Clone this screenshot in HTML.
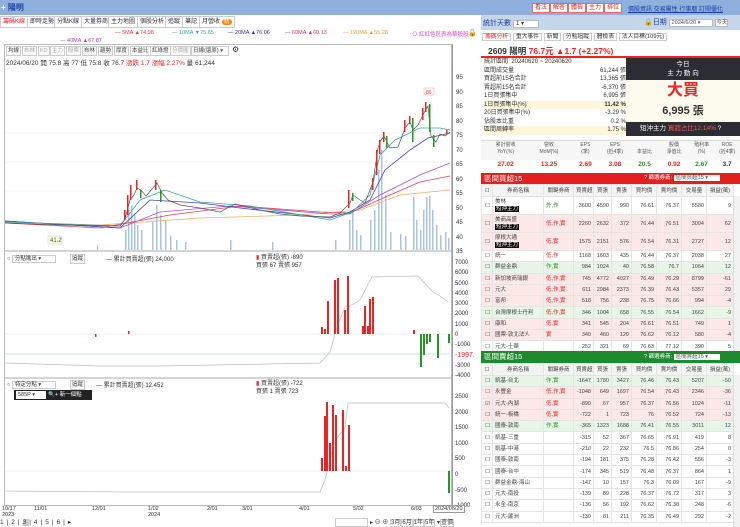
<!DOCTYPE html>
<html><head><meta charset="utf-8">
<style>
*{margin:0;padding:0;box-sizing:border-box}
body{width:740px;height:527px;overflow:hidden;background:#fff;font-family:"Liberation Sans","Noto Sans CJK TC",sans-serif;font-size:7px;color:#333;position:relative}
.a{position:absolute;white-space:nowrap}
.btn{position:absolute;border:1px solid #ccc;background:#fafafa;font-size:5.5px;line-height:8px;height:10px;padding:0 1px;color:#444}
.tab{position:absolute;top:16px;height:12px;border:1px solid #ccc;background:#fff;font-size:6px;line-height:10px;padding:0 2px}
.rb{position:absolute;top:3px;height:10px;background:#fff;border:1px solid #e66;color:#d22;font-size:6px;line-height:8px;padding:0 2px}
table{border-collapse:collapse;font-size:5.5px;table-layout:fixed}
td{border:1px solid #e4e4e4;height:11.3px;line-height:6px;padding:0 2px;text-align:right;color:#444;overflow:hidden;white-space:nowrap}
td.n{text-align:left}
tr.t td{height:18px}
tr.p td{background:#fde8e8}
tr.g td{background:#e8f6e8}
.r{color:#e22}.gr{color:#292}
.hdr td{background:#f4f4f4;text-align:center;height:12px}
.tag{background:#111;color:#fff;padding:0 1px;display:inline-block;margin-top:1px}
</style></head><body>
<div class="a" style="left:0;top:0;width:740px;height:15px;background:#8fb0dc"></div>
<div class="a" style="left:1px;top:2px;font-size:8px;color:#fff;font-weight:bold">+ <span style="color:#1a3fa8">陽明</span></div>
<div class="rb" style="left:532px">看法</div><div class="rb" style="left:550px">解答</div><div class="rb" style="left:568px">體檢</div><div class="rb" style="left:586px">主力</div><div class="rb" style="left:604px">排位</div>
<div class="a" style="left:628px;top:4px;font-size:6px;color:#1a3fa8;text-decoration:underline">價股資訊 交易屬性 行事曆 訂閱優化</div>
<div class="tab" style="left:0;color:#e22">籌碼K線</div>
<div class="tab" style="left:27px">即時走勢</div>
<div class="tab" style="left:54px">分點K線</div>
<div class="tab" style="left:81px">大量券商</div>
<div class="tab" style="left:108px">主力地圖</div>
<div class="tab" style="left:137px">個股分析</div>
<div class="tab" style="left:165px">追蹤</div>
<div class="tab" style="left:182px">筆記</div>
<div class="tab" style="left:199px">月營收 <span style="background:#f80;color:#fff;border-radius:4px;padding:0 2px">新</span></div>
<div class="a" style="left:115px;top:30px;font-size:5.5px;color:#e33">— 5MA ▲74.98</div>
<div class="a" style="left:172px;top:30px;font-size:5.5px;color:#3a9">— 10MA ▼75.65</div>
<div class="a" style="left:228px;top:30px;font-size:5.5px;color:#33a">— 20MA ▲76.06</div>
<div class="a" style="left:285px;top:30px;font-size:5.5px;color:#d36">— 60MA ▲60.13</div>
<div class="a" style="left:343px;top:30px;font-size:5.5px;color:#e9a030">— 120MA ▲55.28</div>
<div class="a" style="left:60px;top:38px;font-size:5.5px;color:#a4a">— 40MA ▲67.87</div>
<div class="a" style="left:412px;top:30px;font-size:5.5px;color:#d4c">⊙ 紅紅色區表為華股股</div>
<div class="a" style="left:468px;top:29px;font-size:7px">🔓</div>
<div class="a" style="left:4px;top:44px;width:448px;height:462px;border:1px solid #bbb"></div>
<div class="a" style="left:452px;top:44px;width:1px;height:462px;background:#99a"></div>
<div class="btn" style="left:6px;top:46px">均線</div><div class="btn" style="left:22px;top:46px;color:#aaa">布林</div><div class="btn" style="left:38px;top:46px;color:#aaa">KD</div><div class="btn" style="left:50px;top:46px;color:#aaa">主力</div><div class="btn" style="left:66px;top:46px;color:#aaa">股票</div><div class="btn" style="left:82px;top:46px">布林</div><div class="btn" style="left:98px;top:46px">趨勢</div><div class="btn" style="left:114px;top:46px">厚度</div><div class="btn" style="left:130px;top:46px">本益比</div><div class="btn" style="left:150px;top:46px">紅綠燈</div><div class="btn" style="left:170px;top:46px;color:#aaa">分價圖</div><div class="btn" style="left:191px;top:46px;width:38px">日線(還原) ▾</div><div class="a" style="left:232px;top:45px;font-size:8px">⚙</div>
<div class="a" style="left:6px;top:57px;font-size:6.5px">2024/06/20 開 75.8 高 77 低 75.8 收 76.7 <span class="r">漲跌 1.7 漲幅 2.27%</span> 量 61,244</div>
<div class="a" style="left:456px;top:71px;font-size:6px;line-height:14.5px;color:#333">95<br>90<br>85<br>80<br>75<br>70<br>65<br>60<br>55<br>50<br>45<br>40<br>35</div>
<svg class="a" style="left:0;top:0" width="480" height="527">
<g stroke="#eee" stroke-width="0.6"><line x1="5" y1="133" x2="450" y2="133"/><line x1="5" y1="162" x2="450" y2="162"/><line x1="5" y1="191" x2="450" y2="191"/><line x1="5" y1="220" x2="450" y2="220"/></g>
<g fill="#a9c4e0">
<rect x="97" y="245" width="1.2" height="5"/><rect x="125" y="230" width="1.5" height="20"/><rect x="128" y="210" width="1.5" height="40"/><rect x="131" y="205" width="1.5" height="45"/><rect x="134" y="215" width="1.5" height="35"/><rect x="137" y="225" width="1.5" height="25"/><rect x="141" y="230" width="1.5" height="20"/><rect x="152" y="222" width="1.5" height="28"/><rect x="156" y="205" width="1.5" height="45"/><rect x="160" y="215" width="1.5" height="35"/><rect x="165" y="220" width="1.5" height="30"/><rect x="170" y="236" width="1.5" height="14"/><rect x="176" y="240" width="1.5" height="10"/><rect x="185" y="242" width="1.5" height="8"/><rect x="230" y="240" width="1.5" height="10"/><rect x="272" y="242" width="1.5" height="8"/><rect x="335" y="240" width="1.5" height="10"/><rect x="349" y="220" width="1.5" height="30"/><rect x="352" y="210" width="1.5" height="40"/><rect x="356" y="230" width="1.5" height="20"/><rect x="360" y="235" width="1.5" height="15"/><rect x="370" y="220" width="1.5" height="30"/><rect x="374" y="210" width="1.5" height="40"/><rect x="378" y="170" width="1.5" height="80"/><rect x="381" y="150" width="1.5" height="100"/><rect x="385" y="195" width="1.5" height="55"/><rect x="390" y="232" width="1.5" height="18"/><rect x="400" y="234" width="1.5" height="16"/><rect x="405" y="236" width="1.5" height="14"/><rect x="413" y="197" width="1.5" height="53"/><rect x="416" y="220" width="1.5" height="30"/><rect x="420" y="230" width="1.5" height="20"/><rect x="423" y="210" width="1.5" height="40"/><rect x="426" y="197" width="1.5" height="53"/><rect x="429" y="196" width="1.5" height="54"/><rect x="432" y="210" width="1.5" height="40"/><rect x="436" y="225" width="1.5" height="25"/><rect x="440" y="235" width="1.5" height="15"/><rect x="445" y="232" width="1.5" height="18"/><rect x="448" y="238" width="1.5" height="12"/>
</g>
<polyline fill="none" stroke="#e9b060" stroke-width="0.8" points="5,222 100,225 200,218 300,215 360,210 400,195 450,190"/>
<polyline fill="none" stroke="#d45" stroke-width="0.8" points="5,223 100,228 170,215 240,206 320,212 350,213 390,195 420,182 450,176"/>
<polyline fill="none" stroke="#a5c" stroke-width="0.8" points="5,221 120,228 160,212 230,206 330,214 350,214 380,195 420,175 450,163"/>
<polyline fill="none" stroke="#44a" stroke-width="0.8" points="5,221 120,228 150,200 200,203 240,208 330,218 350,212 370,200 385,170 410,150 428,138 450,133"/>
<polyline fill="none" stroke="#3a9" stroke-width="0.8" points="5,222 120,226 140,200 165,190 200,202 250,206 330,220 352,212 370,195 380,155 395,140 420,128 440,128 450,130"/>
<polyline fill="none" stroke="#555" stroke-width="0.7" points="5,223 60,225 120,226 125,219 130,200 134,195 137,188 141,190 146,196 152,189 157,183 162,193 168,200 180,205 200,208 220,212 235,204 260,210 280,214 300,216 330,217 340,213 350,203 353,195 360,200 365,203 368,195 373,182 378,148 381,140 384,136 390,148 398,147 405,128 410,122 413,130 418,125 424,113 428,106 431,136 436,142 440,134 445,136 450,132"/>
<g fill="#e22">
<rect x="124" y="210" width="1.5" height="10"/><rect x="127" y="195" width="1.5" height="20"/><rect x="130" y="185" width="1.5" height="15"/><rect x="136" y="180" width="1.5" height="10"/><rect x="155" y="180" width="1.5" height="10"/><rect x="348" y="190" width="1.5" height="18"/><rect x="372" y="178" width="1.5" height="12"/><rect x="376" y="150" width="1.5" height="25"/><rect x="379" y="140" width="1.5" height="14"/><rect x="383" y="132" width="1.5" height="10"/><rect x="404" y="120" width="1.5" height="12"/><rect x="409" y="116" width="1.5" height="8"/><rect x="422" y="108" width="1.5" height="12"/><rect x="425" y="102" width="1.5" height="10"/><rect x="446" y="130" width="1.5" height="4"/></g>
<g fill="#292">
<rect x="140" y="190" width="1.5" height="8"/><rect x="160" y="190" width="1.5" height="12"/><rect x="352" y="193" width="1.5" height="8"/><rect x="386" y="136" width="1.5" height="12"/><rect x="412" y="118" width="1.5" height="24"/><rect x="429" y="104" width="1.5" height="28"/><rect x="433" y="135" width="1.5" height="12"/></g>
<rect x="424" y="88" width="10" height="7" fill="#fff" stroke="#e99" stroke-width="0.5"/><text x="426" y="94" font-size="5" fill="#e33">86</text>
<rect x="48" y="236" width="14" height="8" fill="#ffffe8" stroke="#ccc" stroke-width="0.5"/><text x="50" y="242" font-size="6" fill="#363">41.2</text>
<line x1="5" y1="251" x2="452" y2="251" stroke="#aaa"/>
<line x1="5" y1="378" x2="452" y2="378" stroke="#aaa"/>
<line x1="5" y1="334" x2="450" y2="334" stroke="#ddd" stroke-width="0.6"/>
<line x1="5" y1="354" x2="450" y2="354" stroke="#9bd" stroke-width="0.6"/>
<polyline fill="none" stroke="#bbb" stroke-width="0.7" points="5,363 100,366 160,366 320,363 330,352 337,327 345,307 350,306 360,300 372,277 418,276 433,292 440,296 448,302"/>
<g fill="#e22"><rect x="321" y="327" width="2" height="7"/><rect x="324" y="329" width="2" height="5"/><rect x="327" y="301" width="2" height="33"/><rect x="334" y="280" width="2" height="54"/><rect x="337" y="278" width="2" height="56"/><rect x="344" y="310" width="2" height="24"/><rect x="347" y="276" width="2" height="58"/><rect x="362" y="326" width="2" height="8"/><rect x="364" y="306" width="2" height="28"/><rect x="367" y="326" width="2" height="8"/><rect x="369" y="299" width="2" height="35"/><rect x="372" y="297" width="2" height="37"/><rect x="413" y="330" width="2" height="4"/><rect x="128" y="331" width="1.5" height="3"/></g>
<g fill="#292"><rect x="420" y="334" width="2" height="33"/><rect x="423" y="334" width="2" height="21"/><rect x="426" y="334" width="2" height="10"/><rect x="429" y="334" width="2" height="8"/><rect x="437" y="334" width="2" height="24"/><rect x="448" y="334" width="2" height="9"/><rect x="95" y="334" width="1.5" height="3"/></g>
<line x1="5" y1="471" x2="450" y2="471" stroke="#ddd" stroke-width="0.6"/>
<polyline fill="none" stroke="#bbb" stroke-width="0.7" points="5,491 120,492 320,492 325,480 335,440 345,428 348,403 445,403 449,408"/>
<g fill="#e22"><rect x="321" y="458" width="2" height="13"/><rect x="324" y="416" width="2" height="55"/><rect x="326" y="402" width="2" height="69"/><rect x="329" y="443" width="2" height="28"/><rect x="332" y="405" width="2" height="66"/><rect x="335" y="415" width="2" height="56"/><rect x="342" y="410" width="2" height="61"/><rect x="345" y="466" width="2" height="5"/><rect x="348" y="425" width="2" height="46"/></g>
<rect x="448" y="471" width="2" height="22" fill="#292"/>
</svg>
<div class="a" style="left:7px;top:254px;font-size:5.5px">○ <span style="border:1px solid #ccc;padding:0 14px 0 2px">分點進出 ▾</span></div>
<div class="btn" style="left:70px;top:254px">追蹤</div>
<div class="a" style="left:106px;top:254px;font-size:6px">— 累計買賣超(張) 24,000</div>
<div class="a" style="left:256px;top:254px;font-size:6px;line-height:8px"><span class="r">▮</span> 買賣超(張) -890<br>買張 67 賣張 957</div>
<div class="a" style="left:455px;top:258px;font-size:6px;line-height:10.3px">7000<br>6000<br>5000<br>4000<br>3000<br>2000<br>1000<br>0<br>-1000<br><span class="r" style="font-size:7px">-1997.</span><br>-3000<br>-4000</div>
<div class="a" style="left:7px;top:380px;font-size:5.5px">○ <span style="border:1px solid #ccc;padding:0 14px 0 2px">特定分點 ▾</span></div>
<div class="btn" style="left:70px;top:380px">追蹤</div>
<div class="a" style="left:14px;top:390px;width:78px;height:10px;background:#222"></div>
<div class="a" style="left:16px;top:391px;width:30px;height:8px;background:#fff;font-size:5.5px;line-height:8px;padding-left:2px">585P ▾</div>
<div class="a" style="left:48px;top:390px;font-size:5.5px;color:#fff">🔍+ 新一個點</div>
<div class="a" style="left:96px;top:380px;font-size:6px">— 累計買賣超(張) 12,452</div>
<div class="a" style="left:256px;top:380px;font-size:6px;line-height:8px"><span class="r">▮</span> 買賣超(張) -722<br>買張 1 賣張 723</div>
<div class="a" style="left:455px;top:390px;font-size:6px;line-height:15.6px">2500<br>2000<br>1500<br>1000<br>500<br>0<br>-500<br>-1000</div>
<div class="a" style="left:2px;top:506px;font-size:5.5px;line-height:6px">10/17<br>2023</div>
<div class="a" style="left:34px;top:506px;font-size:5.5px">11/01</div>
<div class="a" style="left:92px;top:506px;font-size:5.5px">12/01</div>
<div class="a" style="left:148px;top:506px;font-size:5.5px;line-height:6px">1/02<br>2024</div>
<div class="a" style="left:207px;top:506px;font-size:5.5px">2/01</div>
<div class="a" style="left:242px;top:506px;font-size:5.5px">3/01</div>
<div class="a" style="left:299px;top:506px;font-size:5.5px">4/01</div>
<div class="a" style="left:353px;top:506px;font-size:5.5px">5/02</div>
<div class="a" style="left:411px;top:506px;font-size:5.5px">6/03</div>
<div class="a" style="left:433px;top:505px;font-size:5.5px;border:1px solid #999;padding:0 1px;background:#fff">2024/06/20</div>
<div class="a" style="left:0;top:518px;font-size:6.5px;letter-spacing:3px">1|2|<span style="background:#ccc">3</span>|4|5|6|▸</div>
<div class="a" style="left:335px;top:518px;width:33px;height:9px;border:1px solid #ccc"></div>
<div class="a" style="left:370px;top:517px;font-size:6px">▸ ⊖ ⊕ <span style="border:1px solid #ccc">3月</span><span style="border:1px solid #ccc">6月</span><span style="border:1px solid #ccc">1年</span><span style="border:1px solid #ccc">5年</span> ▾<span style="border:1px solid #ccc">查價</span></div>

<!-- RIGHT PANEL -->
<div class="a" style="left:481px;top:15px;width:259px;height:15px;background:#c6d6ea"></div>
<div class="a" style="left:483px;top:18px;font-size:7px;color:#1a3fa8">統計天數 <span style="background:#fff;border:1px solid #bbb;color:#333;padding:0 14px 0 2px;font-size:6px">1 ▾</span></div>
<div class="a" style="left:644px;top:17px;font-size:7px;color:#1a3fa8">🔒日期 <span style="background:#fff;border:1px solid #bbb;color:#555;padding:0 12px 0 2px;font-size:5.5px">2024/6/20 ▾</span> <span style="background:#fff;border:1px solid #bbb;color:#555;font-size:5.5px">今天</span></div>
<div class="a" style="left:482px;top:31px;font-size:5.8px"><span style="border:1px solid #ccc;padding:0 2px;color:#e22">籌碼分析</span> <span style="border:1px solid #ccc;padding:0 2px">重大事件</span> <span style="border:1px solid #ccc;padding:0 2px">新聞</span> <span style="border:1px solid #ccc;padding:0 2px">分點追蹤</span> <span style="border:1px solid #ccc;padding:0 2px">體檢表</span> <span style="border:1px solid #ccc;padding:0 2px">法人目標(109元)</span></div>
<div class="a" style="left:488px;top:45px;font-size:8.5px;font-weight:bold">2609 陽明 <span class="r">76.7元 ▲1.7 (+2.27%)</span></div>
<div class="a" style="left:481px;top:56px;width:259px;height:2px;background:#e22"></div>
<div class="a" style="left:484px;top:58px;width:142px;font-size:6px;line-height:8.5px">
<div>統計區間&nbsp; 20240620 ~ 20240620</div>
<div>區間成交量<span style="float:right">61,244 張</span></div>
<div>買超前15名合計<span style="float:right">13,365 張</span></div>
<div>賣超前15名合計<span style="float:right">-6,370 張</span></div>
<div>1日買張集中<span style="float:right">6,995 張</span></div>
<div style="background:#fdf6d8">1日買張集中(%)<span style="float:right;font-weight:bold">11.42 %</span></div>
<div>20日買張集中(%)<span style="float:right">-3.29 %</span></div>
<div>佔股本比重<span style="float:right">0.2 %</span></div>
<div style="background:#fdf6d8">區間周轉率<span style="float:right">1.75 %</span></div>
</div>
<div class="a" style="left:626px;top:58px;width:114px;height:22px;background:#2a2d33;color:#fff;font-size:6.5px;text-align:center;line-height:9px;padding-top:2px">今日<br>主 力 動 向</div>
<div class="a" style="left:626px;top:80px;width:114px;height:42px;background:#fdfbee;text-align:center"><div style="color:#e22;font-size:16px;font-weight:bold;line-height:22px">大買</div><div style="font-size:11px;font-weight:bold">6,995 張</div></div>
<div class="a" style="left:626px;top:122px;width:114px;height:14px;background:#2a2d33;color:#fff;font-size:6.5px;line-height:14px;padding-left:14px">短沖主力 <span style="color:#f55">買超占比12.14%</span> ?</div>
<div class="a" style="left:481px;top:140px;width:259px;height:20px;background:#f7f7f7;border-top:1px solid #ddd"></div>
<div class="a" style="left:484px;top:142px;width:256px;font-size:5px;line-height:7px;color:#555;display:flex;text-align:center">
<div style="width:44px">累計營收<br>YoY(%)</div><div style="width:44px">營收<br>MoM(%)</div><div style="width:30px">EPS<br>(季)</div><div style="width:30px">EPS<br>(近4季)</div><div style="width:30px"><br>本益比</div><div style="width:30px">股價<br>淨值比</div><div style="width:26px">殖利率<br>(%)</div><div style="width:26px">ROE<br>(近4季)</div></div>
<div class="a" style="left:484px;top:161px;width:256px;font-size:6.5px;font-weight:bold;display:flex;text-align:center">
<div style="width:44px" class="r">27.02</div><div style="width:44px" class="r">13.25</div><div style="width:30px" class="r">2.69</div><div style="width:30px" class="r">3.08</div><div style="width:30px" class="gr">20.5</div><div style="width:30px" class="r">0.92</div><div style="width:26px" class="gr">2.67</div><div style="width:26px">3.7</div></div>
<div class="a" style="left:481px;top:173px;width:259px;height:11px;background:#e41f1f;color:#fff;font-size:7.5px;line-height:11px;padding-left:3px">區間買超15<span style="position:absolute;left:163px;font-size:5.5px">? 篩選券商: <span style="background:#fff;color:#555;padding:0 12px 0 2px">區間買超15 ▾</span></span></div>
<table class="a" style="left:481px;top:184px;width:252px">
<colgroup><col style="width:11px"><col style="width:51px"><col style="width:30px"><col style="width:20px"><col style="width:18px"><col style="width:20px"><col style="width:25px"><col style="width:25px"><col style="width:25px"><col style="width:27px"></colgroup>
<tr class="hdr"><td>☐</td><td>券商名稱</td><td>關鍵券商</td><td>買賣超</td><td>買張</td><td>賣張</td><td>買均價</td><td>賣均價</td><td>交易量</td><td>損益(萬)</td></tr>
<tr class="t"><td>☐</td><td class="n">美林<br><span class="tag">短沖主力</span></td><td class="n gr">外,作</td><td>3600</td><td>4590</td><td>990</td><td>76.61</td><td>76.37</td><td>5580</td><td>9</td></tr>
<tr class="p t"><td>☐</td><td class="n">美商高盛<br><span class="tag">短沖主力</span></td><td class="n r">低,作,實</td><td>2260</td><td>2632</td><td>372</td><td>76.44</td><td>76.51</td><td>3004</td><td>62</td></tr>
<tr class="p t"><td>☐</td><td class="n">摩根大通<br><span class="tag">短沖主力</span></td><td class="n r">低,實</td><td>1575</td><td>2151</td><td>576</td><td>76.54</td><td>76.31</td><td>2727</td><td>12</td></tr>
<tr><td>☐</td><td class="n">統一</td><td class="n r">低,作</td><td>1168</td><td>1603</td><td>435</td><td>76.44</td><td>76.37</td><td>2038</td><td>27</td></tr>
<tr class="g"><td>☐</td><td class="n">群益金鼎</td><td class="n gr">作,實</td><td>984</td><td>1024</td><td>40</td><td>76.58</td><td>76.7</td><td>1064</td><td>12</td></tr>
<tr class="p"><td>☐</td><td class="n">新加坡商瑞銀</td><td class="n r">低,作,實</td><td>745</td><td>4772</td><td>4027</td><td>76.49</td><td>76.29</td><td>8799</td><td>-61</td></tr>
<tr class="p"><td>☐</td><td class="n">元大</td><td class="n r">低,作,實</td><td>611</td><td>2984</td><td>2373</td><td>76.39</td><td>76.43</td><td>5357</td><td>29</td></tr>
<tr class="p"><td>☐</td><td class="n">富邦</td><td class="n r">低,作,實</td><td>518</td><td>756</td><td>238</td><td>76.75</td><td>76.66</td><td>994</td><td>-4</td></tr>
<tr class="g"><td>☐</td><td class="n">台灣摩根士丹利</td><td class="n r">低,作,實</td><td>346</td><td>1004</td><td>658</td><td>76.55</td><td>76.54</td><td>1662</td><td>-9</td></tr>
<tr class="p"><td>☐</td><td class="n">康和</td><td class="n r">低,實</td><td>341</td><td>545</td><td>204</td><td>76.61</td><td>76.51</td><td>749</td><td>1</td></tr>
<tr class="p"><td>☐</td><td class="n">國票-敦北法人</td><td class="n r">實</td><td>340</td><td>460</td><td>120</td><td>76.62</td><td>76.12</td><td>580</td><td>-4</td></tr>
<tr><td>☐</td><td class="n">元大-土華</td><td></td><td>252</td><td>321</td><td>69</td><td>76.63</td><td>77.12</td><td>390</td><td>5</td></tr>
</table>
<div class="a" style="left:733px;top:196px;width:7px;height:155px;background:#f2f2f2;border-left:1px solid #ddd"></div>
<div class="a" style="left:481px;top:351px;width:259px;height:12px;background:#1f8a2c;color:#fff;font-size:7.5px;line-height:12px;padding-left:3px">區間賣超15<span style="position:absolute;left:163px;font-size:5.5px">? 篩選券商: <span style="background:#fff;color:#555;padding:0 12px 0 2px">區間賣超15 ▾</span></span></div>
<table class="a" style="left:481px;top:363px;width:252px">
<colgroup><col style="width:11px"><col style="width:51px"><col style="width:30px"><col style="width:20px"><col style="width:18px"><col style="width:20px"><col style="width:25px"><col style="width:25px"><col style="width:25px"><col style="width:27px"></colgroup>
<tr class="hdr"><td>☐</td><td>券商名稱</td><td>關鍵券商</td><td>買賣超</td><td>買張</td><td>賣張</td><td>買均價</td><td>賣均價</td><td>交易量</td><td>損益(萬)</td></tr>
<tr class="g"><td>☐</td><td class="n">凱基-台北</td><td class="n gr">作,實</td><td>-1647</td><td>1780</td><td>3427</td><td>76.46</td><td>76.43</td><td>5207</td><td>-50</td></tr>
<tr class="p"><td>☐</td><td class="n">永豐金</td><td class="n r">低,作,實</td><td>-1048</td><td>649</td><td>1697</td><td>76.54</td><td>76.43</td><td>2346</td><td>-36</td></tr>
<tr class="p"><td>☑</td><td class="n">元大-內湖</td><td class="n r">低,實</td><td>-890</td><td>67</td><td>957</td><td>76.37</td><td>76.56</td><td>1024</td><td>-11</td></tr>
<tr class="p"><td>☐</td><td class="n">統一-板橋</td><td class="n r">低,實</td><td>-722</td><td>1</td><td>723</td><td>76</td><td>76.52</td><td>724</td><td>-13</td></tr>
<tr class="g"><td>☐</td><td class="n">國泰-敦南</td><td class="n gr">作,實</td><td>-365</td><td>1323</td><td>1688</td><td>76.41</td><td>76.55</td><td>3011</td><td>12</td></tr>
<tr><td>☐</td><td class="n">凱基-三重</td><td></td><td>-315</td><td>52</td><td>367</td><td>76.65</td><td>76.91</td><td>419</td><td>8</td></tr>
<tr><td>☐</td><td class="n">凱基-中港</td><td></td><td>-210</td><td>22</td><td>232</td><td>76.5</td><td>76.86</td><td>254</td><td>0</td></tr>
<tr><td>☐</td><td class="n">國泰-敦南</td><td></td><td>-194</td><td>181</td><td>375</td><td>76.28</td><td>76.42</td><td>556</td><td>-3</td></tr>
<tr><td>☐</td><td class="n">國泰-台中</td><td></td><td>-174</td><td>345</td><td>519</td><td>76.48</td><td>76.37</td><td>864</td><td>1</td></tr>
<tr><td>☐</td><td class="n">群益金鼎-海山</td><td></td><td>-147</td><td>10</td><td>157</td><td>76.3</td><td>76.09</td><td>167</td><td>-9</td></tr>
<tr><td>☐</td><td class="n">元大-南投</td><td></td><td>-139</td><td>89</td><td>228</td><td>76.37</td><td>76.72</td><td>317</td><td>3</td></tr>
<tr><td>☐</td><td class="n">永全-南京</td><td></td><td>-136</td><td>56</td><td>192</td><td>76.62</td><td>76.38</td><td>248</td><td>-6</td></tr>
<tr><td>☐</td><td class="n">元大-蘆洲</td><td></td><td>-130</td><td>81</td><td>211</td><td>76.35</td><td>76.49</td><td>292</td><td>-2</td></tr>
</table>
<div class="a" style="left:733px;top:375px;width:7px;height:152px;background:#f2f2f2;border-left:1px solid #ddd"></div>
</body></html>
